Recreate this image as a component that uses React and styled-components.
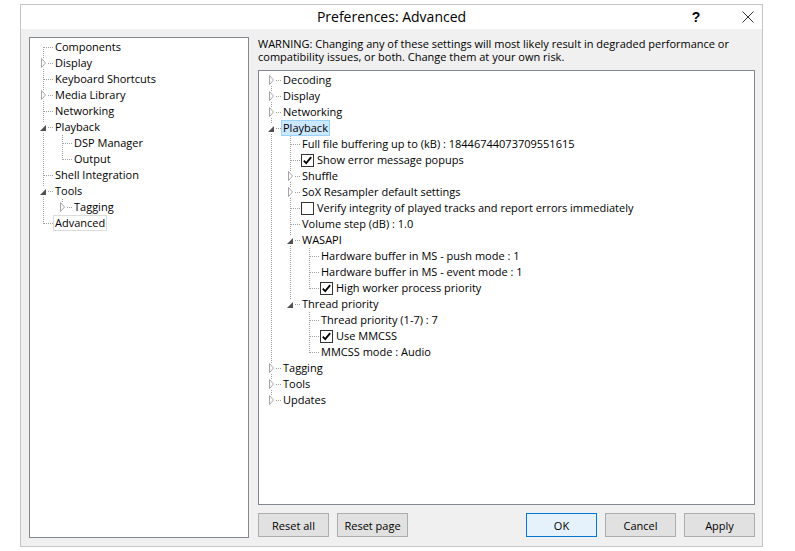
import React from 'react';
import styled, { createGlobalStyle } from 'styled-components';

const Global = createGlobalStyle`
  html, body { margin: 0; padding: 0; background: #fff; }
  body { font-family: "Open Sans", "Noto Sans", sans-serif; color: #000; }
`;

const Page = styled.div`
  width: 795px;
  height: 551px;
  padding: 4px 0 0 20px;
  box-sizing: border-box;
`;

const Window = styled.div`
  width: 743px;
  height: 543px;
  box-sizing: border-box;
  border: 1px solid #c4c4c4;
  display: flex;
  flex-direction: column;
  background: #f0f0f0;
`;

const TitleBar = styled.div`
  height: 24px;
  flex: none;
  background: #fff;
  display: grid;
  grid-template-columns: 1fr auto 1fr;
  align-items: center;
`;

const Title = styled.div`
  grid-column: 2;
  font-size: 14px;
  line-height: 24px;
  color: #000;
`;

const TitleControls = styled.div`
  grid-column: 3;
  justify-self: end;
  display: flex;
  align-items: center;
  gap: 24px;
  height: 24px;
`;

const TitleButton = styled.div`
  width: 28px;
  height: 24px;
  display: flex;
  align-items: center;
  justify-content: center;
  font-family: "Liberation Sans", sans-serif;
  font-weight: bold;
  font-size: 14px;
  color: #000;
`;

const Body = styled.div`
  flex: 1;
  display: flex;
  gap: 9px;
  padding: 8px 7px 8px 8px;
  min-height: 0;
`;

const LeftPanel = styled.div`
  width: 220px;
  flex: none;
  box-sizing: border-box;
  border: 1px solid #828790;
  background: #fff;
  padding: 1px 0 0 4px;
`;

const RightCol = styled.div`
  flex: 1;
  display: flex;
  flex-direction: column;
  min-width: 0;
`;

const Warning = styled.p`
  margin: 0 0 7px 0;
  font-size: 11px;
  line-height: 13px;
`;

const TreeBox = styled.div`
  flex: 1;
  box-sizing: border-box;
  border: 1px solid #828790;
  background: #fff;
  padding: 1px 0 0 3px;
`;

const ButtonRow = styled.div`
  display: flex;
  gap: 8px;
  margin-top: 8px;
  padding-bottom: 1px;
`;

const Spacer = styled.div`
  flex: 1;
`;

const Button = styled.button`
  width: 71px;
  height: 24px;
  box-sizing: border-box;
  border: 1px solid ${(p) => (p.$default ? '#0078d7' : '#adadad')};
  background: ${(p) => (p.$default ? '#e5f1fb' : '#e1e1e1')};
  font-family: inherit;
  font-size: 11px;
  color: #000;
  padding: 0;
`;

const Row = styled.div`
  display: flex;
  align-items: center;
  height: 16px;
  font-size: 11px;
  white-space: nowrap;
`;

const Cell = styled.svg`
  width: 19px;
  height: 16px;
  flex: none;
  display: block;
`;

const Label = styled.span`
  height: 16px;
  box-sizing: border-box;
  border: 1px solid
    ${(p) => (p.$selected ? '#99d1ff' : p.$focus ? '#dcdcdc' : 'transparent')};
  background: ${(p) => (p.$selected ? '#cce8ff' : 'transparent')};
  padding: 0 1px;
  line-height: 14px;
`;

const Box = styled.span`
  width: 13px;
  height: 13px;
  box-sizing: border-box;
  border: 1px solid #333;
  background: #fff;
  margin: 0 1px 0 1px;
  flex: none;
  display: flex;
`;

const DOT = '#a0a0a0';

function Guide({ on }) {
  return (
    <Cell viewBox="0 0 19 16" shapeRendering="crispEdges">
      {on && <line x1="9.5" y1="0" x2="9.5" y2="16" stroke={DOT} strokeDasharray="1 1" />}
    </Cell>
  );
}

function Own({ first, last, kind }) {
  return (
    <Cell viewBox="0 0 19 16" shapeRendering="crispEdges">
      <line
        x1="9.5"
        y1={first ? 8 : 0}
        x2="9.5"
        y2={last ? 9 : 16}
        stroke={DOT}
        strokeDasharray="1 1"
      />
      <line x1="10" y1="8.5" x2="19" y2="8.5" stroke={DOT} strokeDasharray="1 1" />
      {kind && <rect x="5" y="3" width="8" height="11" fill="#fff" />}
      {kind === 'closed' && (
        <polygon
          points="7.5,3.5 11.5,8 7.5,12.5"
          fill="#fff"
          stroke="#a6a6a6"
          strokeWidth="1"
          shapeRendering="geometricPrecision"
        />
      )}
      {kind === 'open' && (
        <polygon points="6,12 12,12 12,6" fill="#505050" shapeRendering="geometricPrecision" />
      )}
    </Cell>
  );
}

function Check({ on }) {
  return (
    <Box>
      {on && (
        <svg width="11" height="11" viewBox="0 0 11 11">
          <path d="M1.8 5.6 L4.2 8.2 L9.2 2.2" fill="none" stroke="#000" strokeWidth="1.8" />
        </svg>
      )}
    </Box>
  );
}

function flatten(nodes, guides, out, root) {
  nodes.forEach((n, i) => {
    const last = i === nodes.length - 1;
    out.push({ ...n, guides, last, first: root && i === 0 });
    if (n.open && n.children) flatten(n.children, [...guides, !last], out, false);
  });
  return out;
}

function Tree({ nodes }) {
  const rows = flatten(nodes, [], [], true);
  return rows.map((r, i) => (
    <Row key={i}>
      {r.guides.map((g, j) => (
        <Guide key={j} on={g} />
      ))}
      <Own
        first={r.first}
        last={r.last}
        kind={r.open ? 'open' : r.closed ? 'closed' : null}
      />
      {r.check !== undefined && <Check on={r.check} />}
      <Label $selected={r.selected} $focus={r.focus}>
        {r.label}
      </Label>
    </Row>
  ));
}

const leftTree = [
  { label: 'Components' },
  { label: 'Display', closed: true },
  { label: 'Keyboard Shortcuts' },
  { label: 'Media Library', closed: true },
  { label: 'Networking' },
  {
    label: 'Playback',
    open: true,
    children: [{ label: 'DSP Manager' }, { label: 'Output' }],
  },
  { label: 'Shell Integration' },
  { label: 'Tools', open: true, children: [{ label: 'Tagging', closed: true }] },
  { label: 'Advanced', focus: true },
];

const rightTree = [
  { label: 'Decoding', closed: true },
  { label: 'Display', closed: true },
  { label: 'Networking', closed: true },
  {
    label: 'Playback',
    open: true,
    selected: true,
    children: [
      { label: 'Full file buffering up to (kB) : 18446744073709551615' },
      { label: 'Show error message popups', check: true },
      { label: 'Shuffle', closed: true },
      { label: 'SoX Resampler default settings', closed: true },
      { label: 'Verify integrity of played tracks and report errors immediately', check: false },
      { label: 'Volume step (dB) : 1.0' },
      {
        label: 'WASAPI',
        open: true,
        children: [
          { label: 'Hardware buffer in MS - push mode : 1' },
          { label: 'Hardware buffer in MS - event mode : 1' },
          { label: 'High worker process priority', check: true },
        ],
      },
      {
        label: 'Thread priority',
        open: true,
        children: [
          { label: 'Thread priority (1-7) : 7' },
          { label: 'Use MMCSS', check: true },
          { label: 'MMCSS mode : Audio' },
        ],
      },
    ],
  },
  { label: 'Tagging', closed: true },
  { label: 'Tools', closed: true },
  { label: 'Updates', closed: true },
];

export default function App() {
  return (
    <Page>
      <Global />
      <Window>
        <TitleBar>
          <Title>Preferences: Advanced</Title>
          <TitleControls>
            <TitleButton>?</TitleButton>
            <TitleButton>
              <svg width="12" height="12" viewBox="0 0 12 12">
                <path d="M0.5 0.5 L11.5 11.5 M11.5 0.5 L0.5 11.5" stroke="#333" strokeWidth="1" />
              </svg>
            </TitleButton>
          </TitleControls>
        </TitleBar>
        <Body>
          <LeftPanel>
            <Tree nodes={leftTree} />
          </LeftPanel>
          <RightCol>
            <Warning>
              WARNING: Changing any of these settings will most likely result in degraded performance or
              compatibility issues, or both. Change them at your own risk.
            </Warning>
            <TreeBox>
              <Tree nodes={rightTree} />
            </TreeBox>
            <ButtonRow>
              <Button>Reset all</Button>
              <Button>Reset page</Button>
              <Spacer />
              <Button $default>OK</Button>
              <Button>Cancel</Button>
              <Button>Apply</Button>
            </ButtonRow>
          </RightCol>
        </Body>
      </Window>
    </Page>
  );
}
